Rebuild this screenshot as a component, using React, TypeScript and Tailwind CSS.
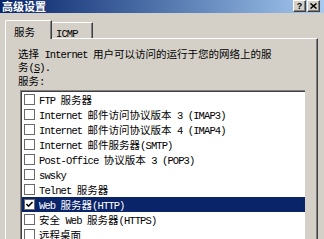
import React from "react";

const CJK = /([\u2E80-\u9FFF\uFF00-\uFFEF\u3000-\u303F]+)/;

function T({ s }: { s: string }) {
  return (
    <>
      {s.split(CJK).map((p, i) =>
        p === "" ? null : CJK.test(p) ? (
          <span key={i} className="font-['Noto_Sans_CJK_SC',sans-serif] text-[10.5px] leading-none">
            {p}
          </span>
        ) : (
          <span key={i} className="font-['Liberation_Mono',monospace] text-[10.5px] leading-none tracking-[-0.9px] whitespace-pre">
            {p}
          </span>
        )
      )}
    </>
  );
}

const rows = [
  "FTP 服务器",
  "Internet 邮件访问协议版本 3 (IMAP3)",
  "Internet 邮件访问协议版本 4 (IMAP4)",
  "Internet 邮件服务器(SMTP)",
  "Post-Office 协议版本 3 (POP3)",
  "swsky",
  "Telnet 服务器",
  "Web 服务器(HTTP)",
  "安全 Web 服务器(HTTPS)",
  "远程桌面",
];

function Check({ checked }: { checked: boolean }) {
  return (
    <div className="w-[11px] h-[11px] bg-white border border-[#6a6a6a] shrink-0 flex items-center justify-center">
      {checked && (
        <svg width="9" height="9" viewBox="0 0 9 9">
          <path d="M1.5 4 L3.5 6.2 L7.5 2" stroke="#000" strokeWidth="1.6" fill="none" />
        </svg>
      )}
    </div>
  );
}

export default function App() {
  return (
    <div className="w-[324px] h-[239px] overflow-hidden bg-[#d4d0c8] flex flex-col text-black font-['Noto_Sans_CJK_SC',sans-serif] text-[10.5px]">
      <div className="h-[13px] shrink-0 flex justify-between bg-linear-to-r from-[#0a246a] to-[#a6caf0] pl-[2px] pr-[4px]">
        <span className="text-white font-bold text-[11px] leading-[13px] font-['Noto_Sans_CJK_SC',sans-serif]">
          高级设置
        </span>
        <div className="flex items-start gap-[1px]">
          <div className="w-[13px] h-[12px] bg-[#d4d0c8] border-l border-t border-white border-r border-b border-r-[#404040] border-b-[#404040] shadow-[inset_-1px_-1px_#808080] flex items-center justify-center">
            <span className="font-['Liberation_Sans',sans-serif] font-bold text-[9px] leading-[9px]">?</span>
          </div>
          <div className="w-[13px] h-[12px] bg-[#d4d0c8] border-l border-t border-white border-r border-b border-r-[#404040] border-b-[#404040] shadow-[inset_-1px_-1px_#808080] flex items-center justify-center">
            <svg width="7" height="6" viewBox="0 0 7 6">
              <path d="M0.5 0.5 L6.5 5.5 M6.5 0.5 L0.5 5.5" stroke="#000" strokeWidth="1.5" />
            </svg>
          </div>
        </div>
      </div>

      <div className="mt-[7px] h-[18px] shrink-0 flex items-end pl-[5px]">
        <div className="relative z-10 -mb-px w-[47px] h-[19px] bg-[#d4d0c8] border-l border-t border-white border-r border-r-[#404040] shadow-[inset_-1px_0_#808080] rounded-tl-[2px] pl-[8px] pt-[4px] leading-[13px]">
          <T s="服务" />
        </div>
        <div className="w-[41px] h-[16px] bg-[#d4d0c8] border-t border-white border-r border-r-[#404040] shadow-[inset_-1px_0_#808080] pl-[4px] pt-[3px] leading-[13px]">
          <T s="ICMP" />
        </div>
      </div>

      <div className="ml-[5px] w-[313px] flex-1 flex flex-col border-t border-l border-white border-r border-r-[#404040] shadow-[inset_-1px_0_#808080] pl-[12px] pt-[8px]">
        <div className="h-[13px] shrink-0 leading-[13px] whitespace-nowrap">
          <T s="选择 Internet 用户可以访问的运行于您的网络上的服" />
        </div>
        <div className="h-[13px] shrink-0 leading-[13px] whitespace-nowrap">
          <T s="务(" />
          <span className="underline">
            <T s="S" />
          </span>
          <T s=")." />
        </div>
        <div className="h-[13px] shrink-0 leading-[13px] mt-[1px]">
          <T s="服务:" />
        </div>
        <div className="mt-[3px] ml-[2px] w-[285px] flex-1 bg-white border-t border-l border-[#808080] shadow-[inset_1px_1px_#404040] pt-[1px] pl-[1px] flex flex-col">
          {rows.map((r, i) => {
            const sel = i === 7;
            return (
              <div
                key={i}
                className={
                  sel
                    ? "h-[15px] shrink-0 flex items-center pl-[2px] gap-[4px] bg-[#0a246a] text-white leading-[15px]"
                    : "h-[15px] shrink-0 flex items-center pl-[2px] gap-[4px] leading-[15px]"
                }
              >
                <Check checked={sel} />
                <div className="whitespace-nowrap">
                  <T s={r} />
                </div>
              </div>
            );
          })}
        </div>
      </div>
    </div>
  );
}
